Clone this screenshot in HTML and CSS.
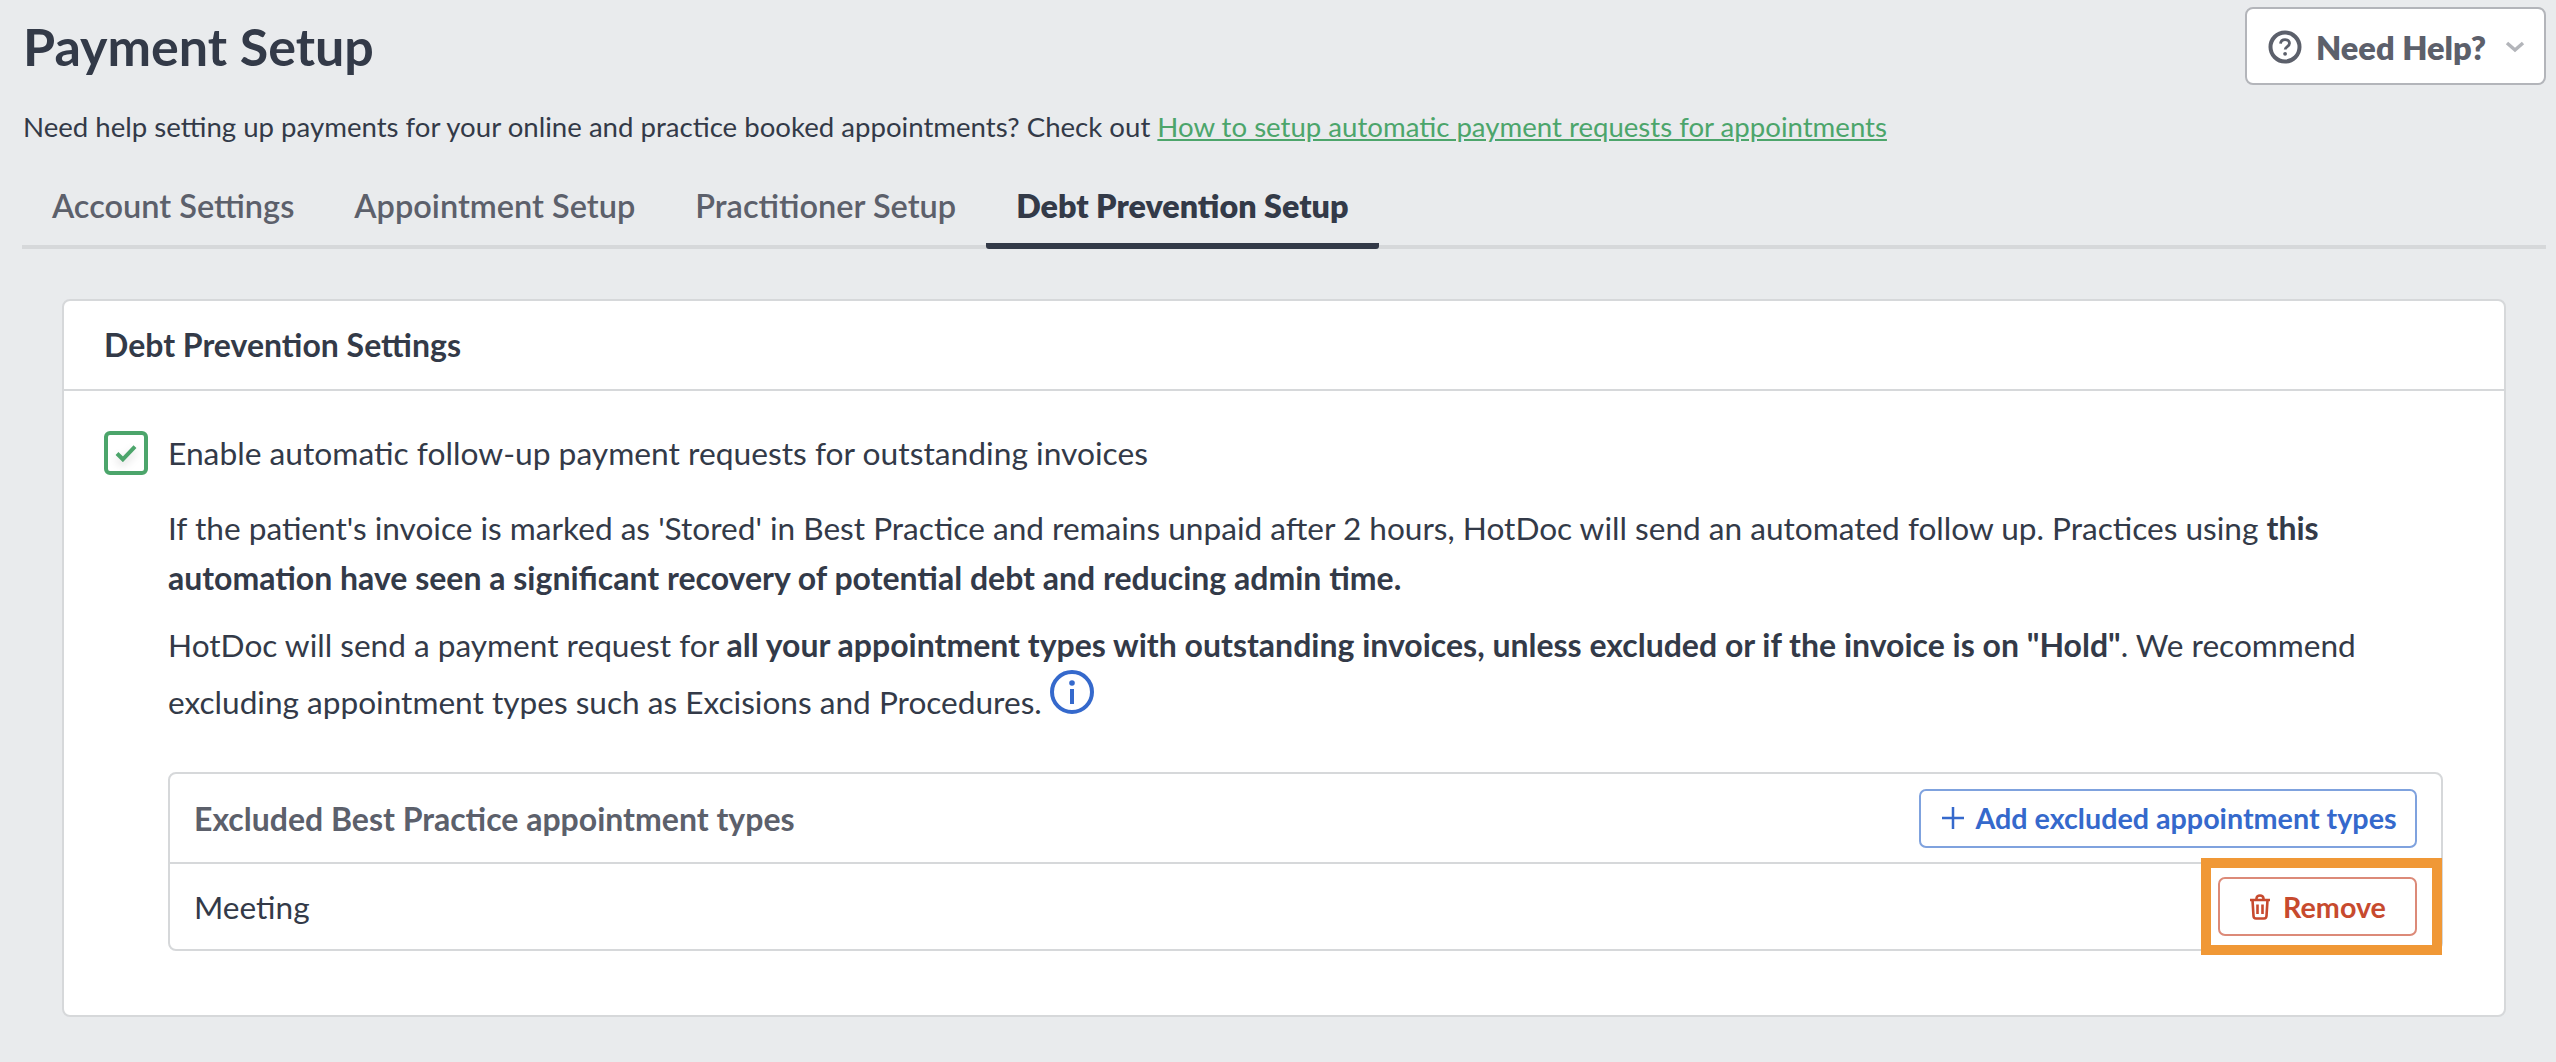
FILE: index.html
```html
<!DOCTYPE html>
<html>

<head>
    <meta charset="UTF-8">
    <title>Payment Setup</title>
    <link rel="stylesheet" href="styles.css">
</head>

<body>
    <div class="page">
        <div class="top-row">
            <h1 class="title">Payment Setup</h1>
            <button class="help-btn">
                <svg class="help-icon" viewBox="0 0 34 34">
                    <circle cx="17" cy="17" r="14.5" fill="none" stroke="#5c606b" stroke-width="4"/>
                    <path d="M12.5 13.6c.3-2.6 2.2-4 4.6-4 2.500 0 4.400 1.500 4.400 3.700 0 3.300-4.200 3.200-4.300 6.200" fill="none" stroke="#5c606b" stroke-width="2.800"/>
                    <circle cx="17.100" cy="23.800" r="1.900" fill="#5c606b"/>
                </svg>
                <span>Need Help?</span>
                <svg class="help-chevron" viewBox="0 0 20 12">
                    <path d="M2 2l8 7 8-7" fill="none" stroke="#b3b5ba" stroke-width="3.500"/>
                </svg>
            </button>
        </div>

        <p class="intro">Need help setting up payments for your online and practice booked appointments? Check out <a href="#">How to setup automatic payment requests for appointments</a></p>

        <div class="tabs">
            <div class="tab">Account Settings</div>
            <div class="tab">Appointment Setup</div>
            <div class="tab">Practitioner Setup</div>
            <div class="tab active">Debt Prevention Setup</div>
        </div>

        <div class="card">
            <div class="card-head">Debt Prevention Settings</div>
            <div class="card-body">
                <div class="check-row">
                    <span class="checkbox">
                        <svg viewBox="0 0 24 20">
                            <path d="M2 10.500l6.500 6.500L22 3" fill="none" stroke="#4ca56b" stroke-width="4.500"/>
                        </svg>
                    </span>
                    <span>Enable automatic follow-up payment requests for outstanding invoices</span>
                </div>

                <div class="details">
                    <p class="para-one">If the patient's invoice is marked as 'Stored' in Best Practice and remains unpaid after 2 hours, HotDoc will send an automated follow up. Practices using <b>this automation have seen a significant recovery of potential debt and reducing admin time.</b></p>
                    <p class="para-two">HotDoc will send a payment request for <b>all your appointment types with outstanding invoices, unless excluded or if the invoice is on "Hold"</b>. We recommend excluding appointment types such as Excisions and Procedures.
                        <svg class="info-icon" viewBox="0 0 44 44">
                            <circle cx="22" cy="22" r="20" fill="none" stroke="#3569cc" stroke-width="4"/>
                            <circle cx="22" cy="13" r="2.800" fill="#3569cc"/>
                            <rect x="20" y="19" width="4" height="15" fill="#3569cc"/>
                        </svg>
                    </p>

                    <div class="excluded">
                        <div class="excluded-head">
                            <span>Excluded Best Practice appointment types</span>
                            <button class="btn btn-add">
                                <svg class="plus" viewBox="0 0 22 22">
                                    <path d="M11 0v22M0 11h22" fill="none" stroke="#3569cc" stroke-width="2.500"/>
                                </svg>
                                Add excluded appointment types
                            </button>
                        </div>
                        <div class="excluded-row">
                            <span>Meeting</span>
                            <button class="btn btn-remove">
                                <svg class="trash" viewBox="0 0 22 26">
                                    <path d="M1 6h20M7.500 6V4.500C7.500 2.500 9 1.500 11 1.500s3.500 1 3.500 3V6M3.500 6l1 16c.1 1.500 1 2.500 2.500 2.500h8c1.500 0 2.400-1 2.500-2.500l1-16M8.500 10.500v9.500M13.500 10.500v9.500" fill="none" stroke="#c74a2e" stroke-width="2.600"/>
                                </svg>
                                Remove
                            </button>
                            <div class="highlight"></div>
                        </div>
                    </div>
                </div>
            </div>
        </div>
    </div>
</body>

</html>
```

FILE: styles.css
```css
* {
    box-sizing: border-box;
}

body {
    margin: 0;
    background: #e9ebed;
    font-family: Lato, "Liberation Sans", sans-serif;
    color: #333a48;
}

.page {
    padding: 7px 10px 40px 22px;
}

.top-row {
    display: flex;
    justify-content: space-between;
    align-items: flex-start;
    height: 78px;
}

.title {
    margin: 8px 0 0 1px;
    font-size: 52px;
    line-height: 62px;
    font-weight: 700;
}

.help-btn {
    display: flex;
    align-items: center;
    width: 301px;
    height: 78px;
    padding: 2px 0 0 21px;
    background: #fff;
    border: 2px solid #b3b5ba;
    border-radius: 8px;
    font-family: inherit;
    font-size: 32.6px;
    font-weight: 800;
    color: #5c606b;
}

.help-icon {
    width: 34px;
    height: 34px;
    margin-right: 14px;
}

.help-chevron {
    width: 20px;
    height: 12px;
    margin-left: 19px;
}

.intro {
    margin: 24px 0 0 1px;
    font-size: 27.6px;
    line-height: 36px;
}

.intro a {
    color: #4ca56b;
}

.tabs {
    display: flex;
    margin-top: 37px;
    height: 67px;
    border-bottom: 4px solid #d6d8da;
}

.tab {
    padding: 0 30px;
    height: 67px;
    font-size: 32.5px;
    line-height: 48px;
    font-weight: 600;
    color: #5c606b;
}

.tab.active {
    color: #333a48;
    font-size: 32.3px;
    font-weight: 800;
    border-bottom: 6px solid #333a48;
    border-radius: 3px;
}

.card {
    margin: 50px 40px 0;
    background: #fff;
    border: 2px solid #d6d8da;
    border-radius: 8px;
}

.card-head {
    height: 90px;
    padding-left: 40px;
    border-bottom: 2px solid #d6d8da;
    font-size: 32px;
    line-height: 88px;
    font-weight: 700;
}

.card-body {
    padding: 40px 40px 64px;
    font-size: 31.6px;
}

.card-body b {
    font-size: 32px;
}

.check-row {
    display: flex;
    align-items: center;
    gap: 20px;
    height: 44px;
    font-size: 31.75px;
}

.checkbox {
    display: flex;
    align-items: center;
    justify-content: center;
    width: 44px;
    height: 44px;
    border: 4px solid #4ca56b;
    border-radius: 6px;
}

.checkbox svg {
    width: 22px;
    height: 18px;
    filter: drop-shadow(0 4px 4px rgba(0, 0, 0, 0.15));
}

.details {
    margin: 28px 21px 0 64px;
}

.details p {
    margin: 0;
    line-height: 49px;
}

.para-one {
    margin-bottom: 17px !important;
}

.info-icon {
    width: 44px;
    height: 44px;
    vertical-align: baseline;
}

.excluded {
    margin-top: 45px;
    border: 2px solid #d6d8da;
    border-radius: 8px;
}

.excluded-head,
.excluded-row {
    position: relative;
    display: flex;
    justify-content: space-between;
    align-items: center;
    padding: 0 24px;
}

.excluded-head {
    height: 90px;
    border-bottom: 2px solid #d6d8da;
    font-size: 32px;
    font-weight: 700;
    color: #5c606b;
}

.excluded-row {
    height: 85px;
}

.btn {
    display: flex;
    align-items: center;
    justify-content: center;
    height: 59px;
    padding: 0;
    background: #fff;
    border: 2px solid;
    border-radius: 7px;
    font-family: inherit;
    font-size: 28.7px;
    font-weight: 700;
}

.btn-add {
    width: 498px;
    padding-left: 3px;
    color: #3569cc;
    border-color: #7fa2de;
}

.btn-remove {
    width: 199px;
    color: #c74a2e;
    border-color: #dc8a78;
}

.plus {
    width: 22px;
    height: 22px;
    margin-right: 11px;
}

.trash {
    width: 22px;
    height: 26px;
    margin-right: 12px;
}

.highlight {
    position: absolute;
    top: -6px;
    right: -1px;
    width: 241px;
    height: 97px;
    border: 10px solid #f09836;
}
```
